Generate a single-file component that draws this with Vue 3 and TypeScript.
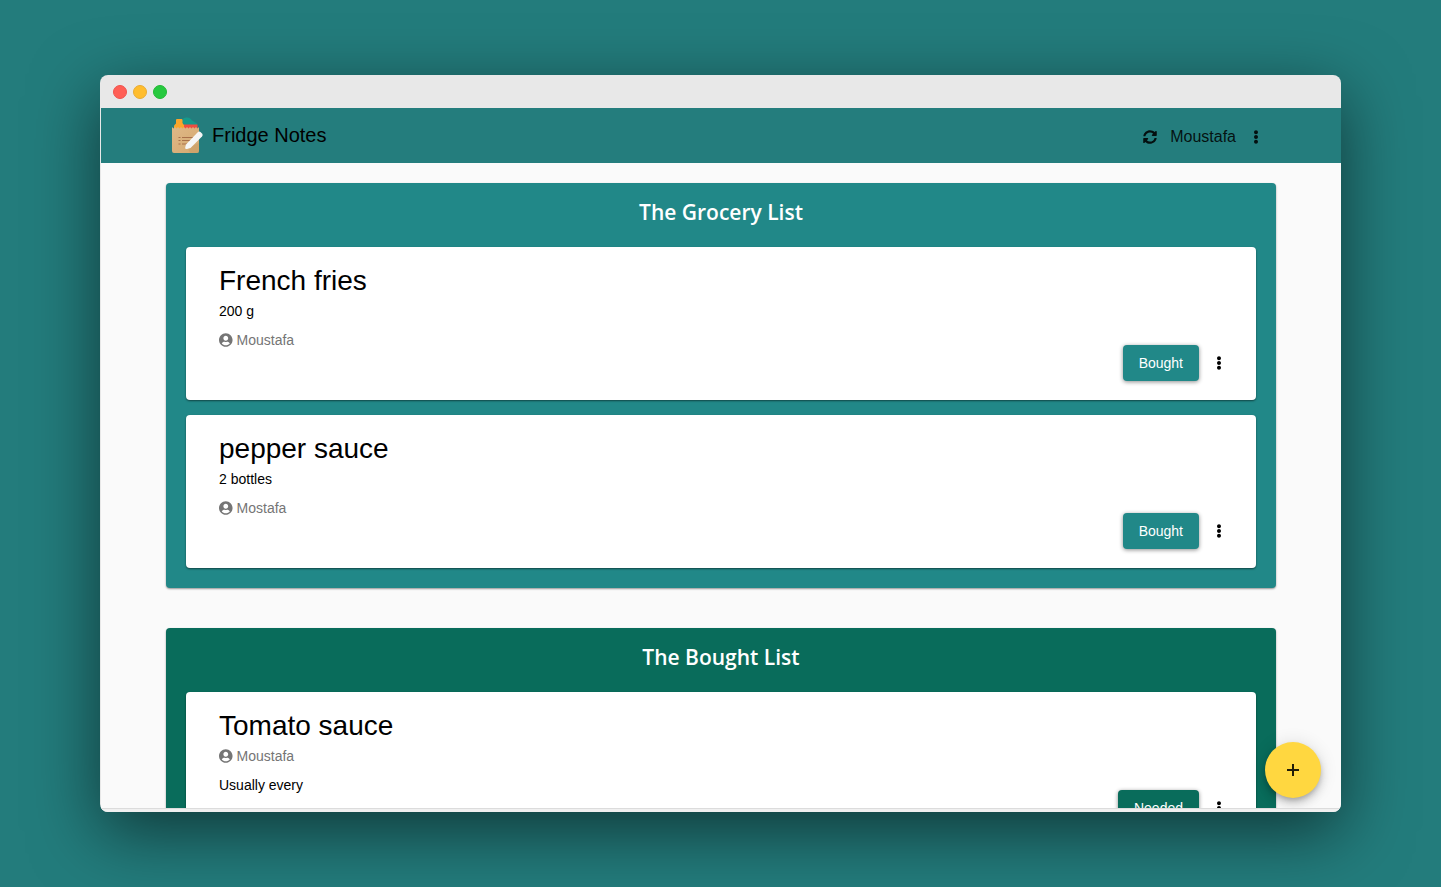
<script setup lang="ts">
import { ref } from 'vue'

interface Item {
  id: number
  title: string
  amount?: string
  user: string
  note?: string
}

interface GroceryList {
  id: string
  heading: string
  action: string
  items: Item[]
}

const userName = ref('Moustafa')

const lists = ref<GroceryList[]>([
  {
    id: 'grocery',
    heading: 'The Grocery List',
    action: 'Bought',
    items: [
      { id: 1, title: 'French fries', amount: '200 g', user: 'Moustafa' },
      { id: 2, title: 'pepper sauce', amount: '2 bottles', user: 'Mostafa' },
    ],
  },
  {
    id: 'bought',
    heading: 'The Bought List',
    action: 'Needed',
    items: [{ id: 3, title: 'Tomato sauce', user: 'Moustafa', note: 'Usually every' }],
  },
])
</script>

<template>
  <div class="desktop">
    <div class="window">
      <div class="titlebar">
        <span class="light red"></span>
        <span class="light yellow"></span>
        <span class="light green"></span>
      </div>

      <div class="app">
        <header class="toolbar">
          <a class="brand" href="#">
            <svg class="logo" viewBox="0 0 36 38" aria-hidden="true">
              <defs>
                <linearGradient id="bag" x1="0" y1="0" x2="1" y2="1">
                  <stop offset="0" stop-color="#dfb887" />
                  <stop offset="1" stop-color="#d5a970" />
                </linearGradient>
              </defs>
              <path d="M12 4.500 Q12 1 16 0.500 Q20 0 22 3.500 L27 6.500 V9 H15 Z" fill="#16998b" />
              <path d="M4 13 V9.500 Q4 8 5 7.500 L6 6.500 V3 Q6 2 7 2 H11.500 Q12.500 2 12.500 3 V6 L14 8 V13 Z" fill="#fba62b" />
              <path d="M14 7.500 H27.500 V13 H14 Z" fill="#ef4d40" />
              <path d="M2 10 L3.500 11.500 L5 10 L6.500 11.500 L8 10 L9.500 11.500 L11 10 L12.500 11.500 L14 10 L15.500 11.500 L17 10 L18.500 11.500 L20 10 L21.500 11.500 L23 10 L24.500 11.500 L26 10 L27.500 11.500 L29 10 V34 Q29 36 27 36 H4 Q2 36 2 34 Z" fill="url(#bag)" />
              <path d="M8.500 20.500h2M8.500 23.500h2M8.500 27h2M12 20.500h11M12 23.500h8M12 27h5" stroke="#a9714a" stroke-width="1.200" />
              <path d="M18 31 L29 26 V34 Q29 36 27 36 H20 Z" fill="#c89b64" opacity="0.500" />
              <path d="M16 27.500 L27.500 15.500 Q29 14 30.500 15 L32 16.500 Q33.500 18 32 19.500 L20.500 31 L17 32 Q15 32.500 15.200 30.500 Z" fill="#f6f6f6" />
            </svg>
            <span>Fridge Notes</span>
          </a>
          <nav class="account">
            <button class="icon-button" type="button" aria-label="Refresh">
              <svg class="sync" viewBox="0 0 512 512" aria-hidden="true">
                <path d="M370.72 133.28C339.458 104.008 298.888 87.962 255.848 88c-77.458.068-144.328 53.178-162.791 126.85-1.344 5.363-6.122 9.15-11.651 9.15H24.103c-7.498 0-13.194-6.807-11.807-14.176C33.933 94.924 134.813 8 256 8c66.448 0 126.791 26.136 171.315 68.685L463.03 40.97C478.149 25.851 504 36.559 504 57.941V192c0 13.255-10.745 24-24 24H345.941c-21.382 0-32.09-25.851-16.971-40.971l41.75-41.749zM32 296h134.059c21.382 0 32.09 25.851 16.971 40.971l-41.75 41.75c31.262 29.273 71.835 45.319 114.876 45.28 77.418-.07 144.315-53.144 162.787-126.849 1.344-5.363 6.122-9.15 11.651-9.15h57.304c7.498 0 13.194 6.807 11.807 14.176C478.067 417.076 377.187 504 256 504c-66.448 0-126.791-26.136-171.315-68.685L48.97 471.03C33.851 486.149 8 475.441 8 454.059V320c0-13.255 10.745-24 24-24z" />
              </svg>
            </button>
            <span class="user-name">{{ userName }}</span>
            <button class="icon-button" type="button" aria-label="Account menu">
              <svg class="dots" viewBox="0 0 192 512" aria-hidden="true">
                <path d="M96 184c39.8 0 72 32.2 72 72s-32.2 72-72 72-72-32.2-72-72 32.2-72 72-72zM24 80c0 39.8 32.2 72 72 72s72-32.2 72-72S135.8 8 96 8 24 40.2 24 80zm0 352c0 39.8 32.2 72 72 72s72-32.2 72-72-32.2-72-72-72-72 32.2-72 72z" />
              </svg>
            </button>
          </nav>
        </header>

        <main class="content">
          <section v-for="list in lists" :key="list.id" class="list" :class="list.id">
            <h2>{{ list.heading }}</h2>
            <article v-for="item in list.items" :key="item.id" class="card">
              <div class="info">
                <h3>{{ item.title }}</h3>
                <p v-if="item.amount">{{ item.amount }}</p>
                <p class="owner">
                  <svg class="avatar" viewBox="0 0 496 512" aria-hidden="true">
                    <path d="M248 8C111 8 0 119 0 256s111 248 248 248 248-111 248-248S385 8 248 8zm0 96c48.6 0 88 39.4 88 88s-39.4 88-88 88-88-39.4-88-88 39.4-88 88-88zm0 344c-58.7 0-111.3-26.6-146.5-68.2 18.8-35.4 55.6-59.8 98.5-59.8 2.4 0 4.8.4 7.1 1.1 13 4.2 26.6 6.9 40.9 6.9 14.3 0 28-2.7 40.9-6.9 2.3-.7 4.7-1.1 7.1-1.1 42.9 0 79.7 24.4 98.5 59.8C359.3 421.4 306.7 448 248 448z" />
                  </svg>
                  {{ item.user }}
                </p>
                <p v-if="item.note">{{ item.note }}</p>
              </div>
              <div class="actions">
                <button class="primary" type="button">{{ list.action }}</button>
                <button class="icon-button" type="button" aria-label="Item menu">
                  <svg class="dots" viewBox="0 0 192 512" aria-hidden="true">
                    <path d="M96 184c39.8 0 72 32.2 72 72s-32.2 72-72 72-72-32.2-72-72 32.2-72 72-72zM24 80c0 39.8 32.2 72 72 72s72-32.2 72-72S135.8 8 96 8 24 40.2 24 80zm0 352c0 39.8 32.2 72 72 72s72-32.2 72-72-32.2-72-72-72-72 32.2-72 72z" />
                  </svg>
                </button>
              </div>
            </article>
          </section>
        </main>

        <button class="fab" type="button" aria-label="Add item">
          <svg viewBox="0 0 12 12" aria-hidden="true">
            <path d="M6 0v12M0 6h12" stroke="currentColor" stroke-width="2" />
          </svg>
        </button>
      </div>
      <div class="window-foot"></div>
    </div>
  </div>
</template>

<style>
body {
  margin: 0;
}
</style>

<style scoped>
* {
  box-sizing: border-box;
}

.desktop {
  display: flex;
  height: 100vh;
  padding: 75px 100px;
  overflow: hidden;
  background: #237c7c;
  font-family: "Liberation Sans", Arial, sans-serif;
  color: #000;
}

.window {
  display: flex;
  flex: 1;
  flex-direction: column;
  min-width: 0;
  overflow: hidden;
  border-radius: 8px;
  background: #e8e8e8;
  box-shadow: 0 20px 68px rgba(0, 0, 0, 0.55);
}

.titlebar {
  display: flex;
  flex: none;
  align-items: center;
  gap: 6px;
  height: 33px;
  padding: 1px 0 0 13px;
}

.light {
  width: 14px;
  height: 14px;
  border: 1px solid;
  border-radius: 50%;
}

.red {
  border-color: #f0534d;
  background: #ff5f56;
}

.yellow {
  border-color: #e9ac33;
  background: #ffbd2e;
}

.green {
  border-color: #22b835;
  background: #27c93f;
}

.app {
  position: relative;
  display: flex;
  flex: 1;
  flex-direction: column;
  min-height: 0;
  margin-left: 1px;
  overflow: hidden;
  background: #fafafa;
}

.window-foot {
  flex: none;
  height: 4px;
  border-top: 1px solid #dcdcdc;
  background: #f0f0f0;
}

.toolbar {
  display: flex;
  flex: none;
  align-items: center;
  justify-content: space-between;
  height: 55px;
  padding: 0 73px 0 69px;
  background: #247d7d;
}

.brand {
  display: flex;
  align-items: center;
  gap: 6px;
  color: #000;
  font-size: 20px;
  line-height: 24px;
  text-decoration: none;
}

.brand span {
  padding-bottom: 2px;
}

.logo {
  width: 36px;
  height: 38px;
}

.account {
  display: flex;
  align-items: center;
  gap: 8px;
  padding-top: 2px;
  font-size: 16px;
  line-height: 20px;
}

.user-name {
  color: rgba(0, 0, 0, 0.87);
}

.icon-button {
  display: flex;
  align-items: center;
  justify-content: center;
  width: 24px;
  height: 36px;
  padding: 0;
  border: 0;
  background: transparent;
  color: inherit;
  cursor: pointer;
}

.account .icon-button {
  color: rgba(0, 0, 0, 0.87);
}

svg {
  display: block;
  fill: currentColor;
}

.sync,
.avatar {
  height: 14px;
}

.dots {
  width: 6px;
  height: 14px;
}

.content {
  flex: 1;
  min-height: 0;
  padding: 20px 65px;
  overflow: hidden;
}

.list {
  display: flex;
  flex-direction: column;
  gap: 15px;
  margin-bottom: 40px;
  padding: 13px 20px 20px;
  border-radius: 4px;
  box-shadow: 0 1px 2px rgba(0, 0, 0, 0.4);
}

.grocery {
  --tone: #218888;
  background: var(--tone);
}

.bought {
  --tone: #096c5b;
  background: var(--tone);
}

h2 {
  margin: 0;
  padding-bottom: 4px;
  color: #fff;
  font: 600 21px/32px "Open Sans", "Noto Sans", sans-serif;
  text-align: center;
}

.card {
  display: flex;
  align-items: flex-end;
  justify-content: space-between;
  padding: 18px 25px 19px 33px;
  border-radius: 4px;
  background: #fff;
  box-shadow: 0 1px 2px rgba(0, 0, 0, 0.5);
}

.info {
  display: flex;
  flex-direction: column;
  gap: 9px;
  min-height: 116px;
}

h3 {
  margin: 0 0 -5px;
  font-size: 28px;
  font-weight: 400;
  line-height: 32px;
}

p {
  margin: 0;
  font-size: 14px;
  line-height: 20px;
}

.owner {
  display: flex;
  align-items: center;
  gap: 4px;
  color: #757575;
}

.actions {
  display: flex;
  gap: 8px;
}

.primary {
  height: 36px;
  padding: 0 16px;
  border: 0;
  border-radius: 4px;
  background: var(--tone);
  color: #fff;
  font: 500 14px/36px "Liberation Sans", Arial, sans-serif;
  box-shadow: 0 1px 4px rgba(0, 0, 0, 0.45);
  cursor: pointer;
}

.fab {
  position: absolute;
  right: 20px;
  bottom: 10px;
  display: flex;
  align-items: center;
  justify-content: center;
  width: 56px;
  height: 56px;
  padding: 0;
  border: 0;
  border-radius: 50%;
  background: #ffd740;
  color: rgba(0, 0, 0, 0.87);
  box-shadow: 0 3px 5px -1px rgba(0, 0, 0, 0.2), 0 6px 10px rgba(0, 0, 0, 0.14), 0 1px 18px rgba(0, 0, 0, 0.12);
  cursor: pointer;
}

.fab svg {
  width: 12px;
  height: 12px;
}
</style>
